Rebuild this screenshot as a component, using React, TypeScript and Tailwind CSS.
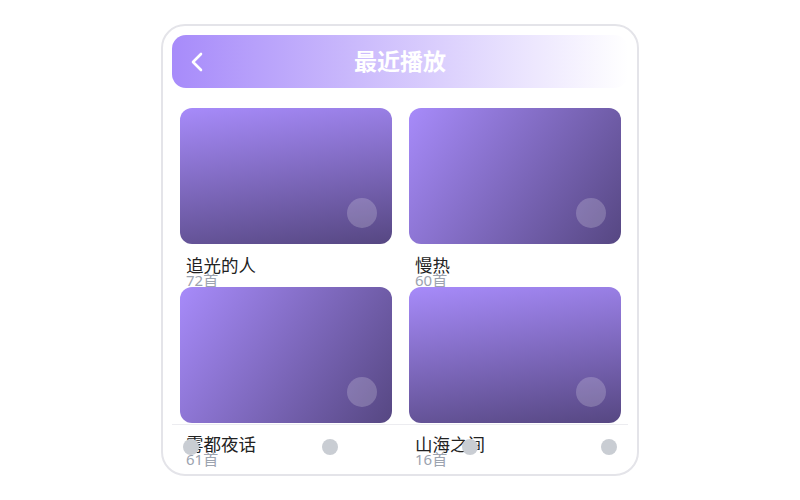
import React from "react";

type Playlist = {
  name: string;
  count: number;
  gradient: string;
};

const playlists: Playlist[] = [
  { name: "追光的人", count: 72, gradient: "bg-linear-[172deg]" },
  { name: "慢热", count: 60, gradient: "bg-linear-[125deg]" },
  { name: "雾都夜话", count: 61, gradient: "bg-linear-[125deg]" },
  { name: "山海之间", count: 16, gradient: "bg-linear-[172deg]" },
];

function BackIcon() {
  return (
    <svg width="14" height="20" viewBox="0 0 14 20" fill="none">
      <polyline
        points="11,2 3,10 11,18"
        stroke="white"
        strokeWidth="2.6"
        strokeLinecap="round"
        strokeLinejoin="round"
      />
    </svg>
  );
}

function PlaylistCard({ item }: { item: Playlist }) {
  return (
    <div className="flex flex-col">
      <div
        className={`relative h-[136px] rounded-[12px] ${item.gradient} from-[#a78bfa] to-[#564782]`}
      >
        <div className="absolute right-[15px] bottom-[16px] h-[30px] w-[30px] rounded-full bg-white/20" />
      </div>
      <div className="pl-[6px] pt-[12px]">
        <div className="text-[17.5px] leading-[18px] text-[#222]">{item.name}</div>
        <div className="-mt-[1px] text-[15px] leading-[14px] text-[#9ca3af]">
          {item.count}首
        </div>
      </div>
    </div>
  );
}

export default function App() {
  return (
    <div
      className="flex h-[500px] w-[800px] items-center justify-center bg-white"
      style={{ fontFamily: '"Noto Sans", "Noto Sans CJK SC", sans-serif' }}
    >
      <div className="relative h-[452px] w-[478px] overflow-hidden rounded-[24px] border-2 border-[#e4e4e9] bg-white p-[9px]">
        <header className="relative flex h-[53px] items-center rounded-[14px] bg-linear-to-r from-[#a78bfa] to-[#a78bfa]/0">
          <div className="absolute left-[18px] top-0 flex h-full items-center">
            <BackIcon />
          </div>
          <h1 className="w-full text-center text-[23px] font-bold leading-none text-white">
            最近播放
          </h1>
        </header>

        <div className="mt-[20px] grid grid-cols-2 gap-x-[17px] pl-[8px] pr-[7px]">
          {playlists.map((p) => (
            <PlaylistCard key={p.name} item={p} />
          ))}
        </div>

        <nav className="absolute bottom-[6px] left-[9px] right-[9px] flex h-[44px] items-center justify-between border-t border-[#ececf0] px-[11px]">
          <span className="h-[16px] w-[16px] rounded-full bg-[#c9cdd3]" />
          <span className="h-[16px] w-[16px] rounded-full bg-[#c9cdd3]" />
          <span className="h-[16px] w-[16px] rounded-full bg-[#c9cdd3]" />
          <span className="h-[16px] w-[16px] rounded-full bg-[#c9cdd3]" />
        </nav>
      </div>
    </div>
  );
}
